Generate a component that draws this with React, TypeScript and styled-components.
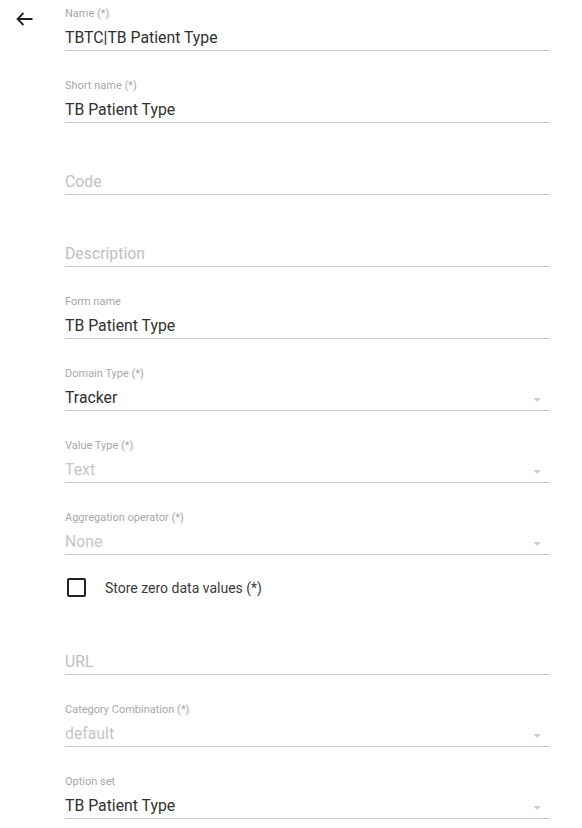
import styled, { createGlobalStyle } from 'styled-components';

const GlobalStyle = createGlobalStyle`
  body {
    margin: 0;
    background: #fff;
    font-family: Roboto, 'Liberation Sans', sans-serif;
  }
`;

const Page = styled.div`
  display: flex;
  width: 582px;
  height: 828px;
  overflow: hidden;
`;

const BackColumn = styled.div`
  width: 65px;
  flex: 0 0 65px;
  padding: 11px 0 0 16px;
  box-sizing: border-box;
`;

const Form = styled.div`
  display: flex;
  flex-direction: column;
  width: 484px;
  flex-shrink: 0;
`;

const Field = styled.div`
  position: relative;
  flex: 0 0 72px;
  height: 72px;
  box-sizing: border-box;
  padding-top: 7px;
`;

const Label = styled.div`
  height: 13px;
  font-size: 11px;
  line-height: 13px;
  color: #a8a8a8;
  white-space: nowrap;
`;

const Value = styled.div<{ $muted?: boolean; $placeholder?: boolean }>`
  height: 30px;
  padding-top: 7.5px;
  box-sizing: border-box;
  font-size: 15.8px;
  line-height: 19px;
  color: ${({ $muted, $placeholder }) =>
    $placeholder ? '#c0c0c0' : $muted ? '#c6c6c6' : '#303030'};
  white-space: nowrap;
`;

const Underline = styled.div`
  height: 1px;
  background: #c6c6c6;
`;

const Arrow = styled.span`
  position: absolute;
  right: 8px;
  top: 38px;
  width: 0;
  height: 0;
  border-left: 4px solid transparent;
  border-right: 4px solid transparent;
  border-top: 4px solid #cdcdcd;
`;

const CheckRow = styled.div`
  display: flex;
  flex: 0 0 48px;
  align-items: center;
  gap: 19px;
  height: 48px;
  padding: 0 0 25px 2px;
  box-sizing: border-box;
`;

const Box = styled.span`
  width: 15px;
  height: 15px;
  border: 2px solid #222;
  border-radius: 2px;
`;

const CheckLabel = styled.span`
  font-size: 14px;
  color: #3a3a3a;
`;

type FieldDef = {
  label?: string;
  value: string;
  kind?: 'normal' | 'muted' | 'placeholder';
  select?: boolean;
};

const top: FieldDef[] = [
  { label: 'Name (*)', value: 'TBTC|TB Patient Type' },
  { label: 'Short name (*)', value: 'TB Patient Type' },
  { value: 'Code', kind: 'placeholder' },
  { value: 'Description', kind: 'placeholder' },
  { label: 'Form name', value: 'TB Patient Type' },
  { label: 'Domain Type (*)', value: 'Tracker', select: true },
  { label: 'Value Type (*)', value: 'Text', kind: 'muted', select: true },
  { label: 'Aggregation operator (*)', value: 'None', kind: 'muted', select: true },
];

const bottom: FieldDef[] = [
  { value: 'URL', kind: 'placeholder' },
  { label: 'Category Combination (*)', value: 'default', kind: 'muted', select: true },
  { label: 'Option set', value: 'TB Patient Type', select: true },
];

const TextField = ({ f }: { f: FieldDef }) => (
  <Field>
    <Label>{f.label ?? ''}</Label>
    <Value $muted={f.kind === 'muted'} $placeholder={f.kind === 'placeholder'}>
      {f.value}
    </Value>
    <Underline />
    {f.select && <Arrow />}
  </Field>
);

export default function App() {
  return (
    <Page>
      <GlobalStyle />
      <BackColumn>
        <svg width="17" height="14" viewBox="0 0 17 14">
          <path d="M16.5 7H1.5M7.5 1L1.5 7l6 6" fill="none" stroke="#222" strokeWidth="1.8" />
        </svg>
      </BackColumn>
      <Form>
        {top.map((f) => (
          <TextField key={f.value + f.label} f={f} />
        ))}
        <CheckRow>
          <Box />
          <CheckLabel>Store zero data values (*)</CheckLabel>
        </CheckRow>
        {bottom.map((f) => (
          <TextField key={f.value + f.label} f={f} />
        ))}
      </Form>
    </Page>
  );
}
